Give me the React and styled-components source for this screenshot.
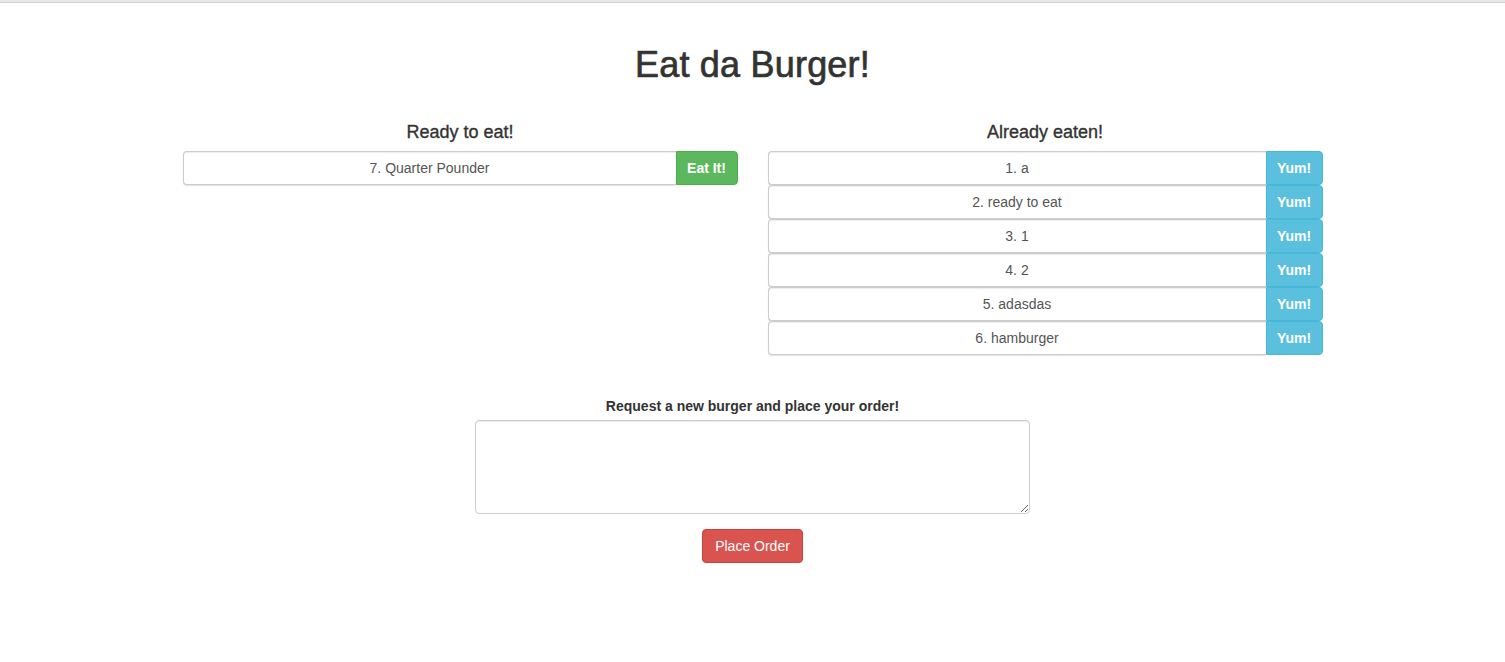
import React from "react";
import styled, { createGlobalStyle } from "styled-components";

const GlobalStyle = createGlobalStyle`
  * { box-sizing: border-box; }
  html, body { margin: 0; padding: 0; background: #fff; }
  body {
    font-family: "Liberation Sans", Arial, Helvetica, sans-serif;
    font-size: 14px;
    line-height: 1.42857;
    color: #333;
  }
`;

const TopBar = styled.div`
  height: 2px;
  background: #e8e8e8;
  border-bottom: 1px solid #d3d3d3;
  box-sizing: content-box;
`;

const Container = styled.div`
  width: 1170px;
  margin: 0 auto;
  padding: 0 15px;
`;

const Title = styled.h1`
  margin: 42px 0 0;
  font-size: 36px;
  font-weight: 500;
  line-height: 39.6px;
  letter-spacing: 0.2px;
  text-align: center;
  color: #333;
  -webkit-text-stroke: 0.7px #333;
`;

const Columns = styled.div`
  display: grid;
  grid-template-columns: 1fr 1fr;
  column-gap: 30px;
  margin-top: 38px;
`;

const Column = styled.div`
  display: flex;
  flex-direction: column;
`;

const ColumnTitle = styled.h4`
  margin: 0 0 9px;
  font-size: 18px;
  font-weight: 500;
  line-height: 19.8px;
  text-align: center;
  color: #333;
  -webkit-text-stroke: 0.35px #333;
`;

const InputGroup = styled.div`
  display: flex;
  height: 34px;
`;

const Field = styled.div`
  flex: 1;
  height: 34px;
  padding: 6px 12px;
  border: 1px solid #ccc;
  border-right: 0;
  border-radius: 4px 0 0 4px;
  box-shadow: inset 0 1px 1px rgba(0, 0, 0, 0.075), 0 1px 1px rgba(0, 0, 0, 0.12);
  text-align: center;
  font-size: 14px;
  line-height: 20px;
  color: #555;
  background: #fff;
`;

const AddonButton = styled.button`
  width: ${(p) => p.$w}px;
  height: 34px;
  padding: 0;
  border: 1px solid ${(p) => p.$border};
  border-radius: 0 4px 4px 0;
  background: ${(p) => p.$bg};
  color: #fff;
  font-family: inherit;
  font-size: 14px;
  font-weight: 700;
  line-height: 20px;
  cursor: pointer;
`;

const OrderForm = styled.form`
  width: 555px;
  margin: 41px auto 0;
  display: flex;
  flex-direction: column;
  align-items: center;
`;

const Label = styled.label`
  display: block;
  margin-bottom: 4px;
  font-weight: 700;
  font-size: 14px;
  line-height: 20px;
  text-align: center;
  color: #333;
`;

const TextArea = styled.textarea`
  display: block;
  width: 555px;
  height: 94px;
  padding: 6px 12px;
  border: 1px solid #ccc;
  border-radius: 4px;
  box-shadow: inset 0 1px 1px rgba(0, 0, 0, 0.075);
  font-family: inherit;
  font-size: 14px;
  color: #555;
  background: #fff;
  outline: none;
`;

const SubmitButton = styled.button`
  margin-top: 15px;
  height: 34px;
  padding: 6px 12px;
  border: 1px solid #d43f3a;
  border-radius: 4px;
  background: #d9534f;
  color: #fff;
  font-family: inherit;
  font-size: 14px;
  line-height: 20px;
  width: 101px;
  cursor: pointer;
`;

const ready = [{ id: 7, name: "Quarter Pounder" }];
const eaten = [
  { id: 1, name: "a" },
  { id: 2, name: "ready to eat" },
  { id: 3, name: "1" },
  { id: 4, name: "2" },
  { id: 5, name: "adasdas" },
  { id: 6, name: "hamburger" },
];

export default function App() {
  return (
    <>
      <GlobalStyle />
      <TopBar />
      <Container>
        <Title>Eat da Burger!</Title>
        <Columns>
          <Column>
            <ColumnTitle>Ready to eat!</ColumnTitle>
            {ready.map((b) => (
              <InputGroup key={b.id}>
                <Field>
                  {b.id}. {b.name}
                </Field>
                <AddonButton $w={62} $bg="#5cb85c" $border="#4cae4c">
                  Eat It!
                </AddonButton>
              </InputGroup>
            ))}
          </Column>
          <Column>
            <ColumnTitle>Already eaten!</ColumnTitle>
            {eaten.map((b) => (
              <InputGroup key={b.id}>
                <Field>
                  {b.id}. {b.name}
                </Field>
                <AddonButton $w={57} $bg="#5bc0de" $border="#46b8da">
                  Yum!
                </AddonButton>
              </InputGroup>
            ))}
          </Column>
        </Columns>
        <OrderForm onSubmit={(e) => e.preventDefault()}>
          <Label htmlFor="burger">Request a new burger and place your order!</Label>
          <TextArea id="burger" />
          <SubmitButton type="submit">Place Order</SubmitButton>
        </OrderForm>
      </Container>
    </>
  );
}
